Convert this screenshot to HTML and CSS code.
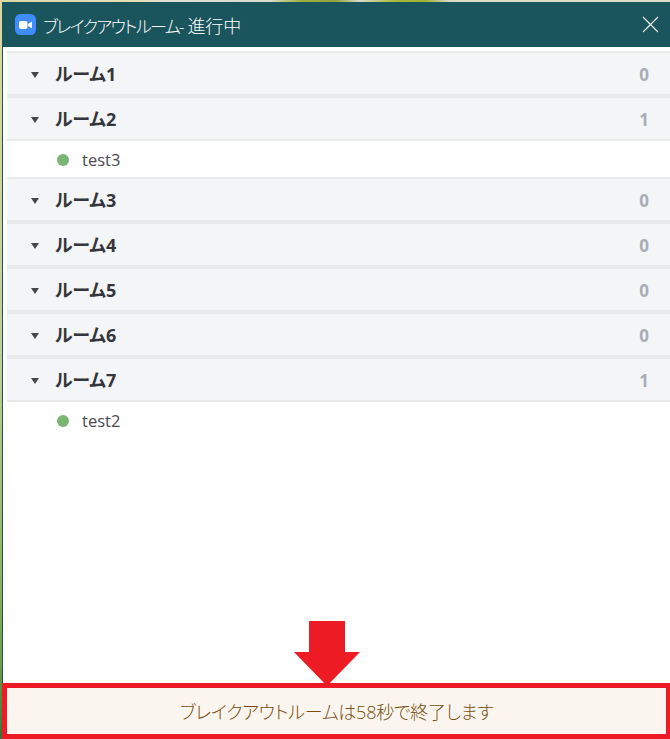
FILE: index.html
```html
<!DOCTYPE html>
<html lang="ja">
<head>
<meta charset="utf-8">
<title>ブレイクアウトルーム</title>
<link rel="stylesheet" href="styles.css">
</head>
<body>
<div class="desktop">
  <div class="window">
    <header class="titlebar">
      <svg class="app-icon" width="21" height="21" viewBox="0 0 21 21">
        <rect width="21" height="21" rx="5.5" fill="#3f8cff"/>
        <rect x="4" y="7" width="8.5" height="8" rx="2" fill="#fff"/>
        <path d="M13.2 10l3.8-2.6v7.2L13.2 12z" fill="#fff"/>
      </svg>
      <span class="title"><span class="title-name">ブレイクアウトルーム-</span> <span class="title-state">進行中</span></span>
      <svg class="close" width="17" height="17" viewBox="0 0 17 17">
        <path d="M1 1l15 15M16 1L1 16" stroke="#fff" stroke-width="1.1" fill="none"/>
      </svg>
    </header>
    <main class="rooms">
      <section class="room"><div class="room-head"><i class="caret"></i><b class="room-name">ルーム1</b><b class="count">0</b></div></section>
      <section class="room open"><div class="room-head"><i class="caret"></i><b class="room-name">ルーム2</b><b class="count">1</b></div><div class="member"><i class="dot"></i><span>test3</span></div></section>
      <section class="room"><div class="room-head"><i class="caret"></i><b class="room-name">ルーム3</b><b class="count">0</b></div></section>
      <section class="room"><div class="room-head"><i class="caret"></i><b class="room-name">ルーム4</b><b class="count">0</b></div></section>
      <section class="room"><div class="room-head"><i class="caret"></i><b class="room-name">ルーム5</b><b class="count">0</b></div></section>
      <section class="room"><div class="room-head"><i class="caret"></i><b class="room-name">ルーム6</b><b class="count">0</b></div></section>
      <section class="room open"><div class="room-head"><i class="caret"></i><b class="room-name">ルーム7</b><b class="count">1</b></div><div class="member"><i class="dot"></i><span>test2</span></div></section>
    </main>
    <footer class="notice">ブレイクアウトルームは58秒で終了します</footer>
  </div>
  <svg class="arrow" width="66" height="65" viewBox="0 0 66 65">
    <path d="M15 0h36v31h15L33 65 0 31h15z" fill="#ed1c24"/>
  </svg>
</div>
</body>
</html>
```
FILE: styles.css
```css
* { box-sizing: border-box; }
html, body { margin: 0; height: 100%; overflow: hidden; }
body { font-family: "Open Sans", "Noto Sans CJK JP", sans-serif; }
.desktop {
  position: relative;
  width: 670px;
  height: 739px;
  padding: 2px 0 0 2px;
  background:
    linear-gradient(90deg, #dcd8a4 0, #e2deb8 140px, #dfdfd8 170px, #d8dcc8 270px, #9fb040 300px, #8fa53c 335px, #d9dcc8 360px, #a8b83a 395px, #a0b030 425px, #d9dbc4 450px, #dcdcc8 670px) 0 0 / 100% 2px no-repeat,
    linear-gradient(#dcd8a4 0, #c2cc9c 50%, #8fb060 78%, #6f9c48 90%, #3f6f38 100%);
}
.window { height: 737px; display: flex; flex-direction: column; background: #fff; }
.titlebar {
  flex: none;
  height: 45px;
  display: flex;
  align-items: center;
  padding: 0 11px 0 13px;
  background: #1a545c;
  color: #fff;
}
.app-icon { flex: none; margin-right: 7px; }
.title { flex: 1; font-size: 17px; font-weight: 300; }
.title-name { font-feature-settings: "palt"; letter-spacing: -1.6px; }
.title-state { font-size: 18px; }
.rooms { flex: 1; padding: 4px 0 0 4px; border-left: 1px solid #1a545c; }
.room { border-top: 2px solid #e8e9eb; }
.room + .room { border-top-width: 4px; }
.room.open + .room { border-top-width: 2px; }
.room-head {
  height: 41px;
  display: flex;
  align-items: center;
  padding: 0 21px 0 24px;
  background: #f4f5f7;
  color: #35363b;
}
.caret {
  width: 0;
  height: 0;
  margin: 2px 16px 0 0;
  border-style: solid;
  border-width: 6px 4.5px 0;
  border-color: #45464b transparent transparent;
}
.room-name { flex: 1; padding-bottom: 2px; font-size: 18px; font-weight: 700; font-feature-settings: "palt"; }
.count { padding-top: 2px; font-size: 17px; font-weight: 700; color: #a8adb8; }
.member {
  height: 38px;
  display: flex;
  align-items: center;
  padding: 1px 0 0 50px;
  border-top: 2px solid #e8e9eb;
  font-size: 16.5px;
  color: #484a50;
}
.dot { width: 12px; height: 12px; margin-right: 13px; border-radius: 50%; background: #7ab574; }
.notice {
  flex: none;
  height: 56px;
  display: flex;
  align-items: center;
  justify-content: center;
  border: 5px solid #ed1c24;
  border-right-width: 4px;
  background: #faf6ef;
  color: #7a4c0e;
  font-size: 18px;
  font-weight: 300;
  letter-spacing: -0.25px;
  font-feature-settings: "palt";
}
.arrow { position: absolute; left: 294px; top: 621px; }
```
